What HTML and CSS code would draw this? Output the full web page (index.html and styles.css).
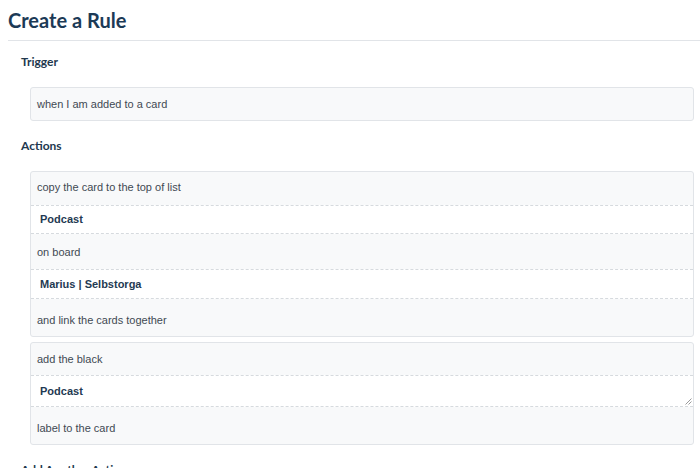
FILE: index.html
```html
<!DOCTYPE html>
<html>
<head>
<meta charset="utf-8">
<link rel="stylesheet" href="styles.css">
</head>
<body>
<div class="page">
  <h1 class="title">Create a Rule</h1>
  <section class="section first">
    <h2 class="label">Trigger</h2>
    <div class="box">
      <div class="row single">when I am added to a card</div>
    </div>
  </section>
  <section class="section">
    <h2 class="label">Actions</h2>
    <div class="box">
      <div class="row top">copy the card to the top of list</div>
      <div class="field h27">Podcast</div>
      <div class="row mid">on board</div>
      <div class="field h28">Marius | Selbstorga</div>
      <div class="row end">and link the cards together</div>
    </div>
    <div class="box">
      <div class="row top2">add the black</div>
      <div class="field h30 resizable">Podcast<svg class="grip" width="8" height="8" viewBox="0 0 8 8"><path d="M7.5 1.5 L1.5 7.5 M7.5 4.5 L4.5 7.5" stroke="#9a9a9a" stroke-width="1" fill="none"/></svg></div>
      <div class="row end">label to the card</div>
    </div>
  </section>
  <section class="section">
    <h2 class="label">Add Another Action</h2>
  </section>
</div>
</body>
</html>
```

FILE: styles.css
```css
html, body {
  margin: 0;
  padding: 0;
  background: #ffffff;
}
body {
  font-family: "Liberation Sans", Arial, sans-serif;
  overflow: hidden;
}
.page {
  padding-left: 8px;
}
.title {
  margin: 0;
  font-family: Lato, "Open Sans", sans-serif;
  font-weight: 700;
  font-size: 20px;
  line-height: 40px;
  color: #1c3a56;
  border-bottom: 1px solid #e1e4e8;
}
.section {
  padding-left: 13px;
  margin-top: 15px;
}
.section.first {
  margin-top: 11px;
}
.label {
  margin: 0 0 15px;
  font-family: Lato, "Open Sans", sans-serif;
  font-weight: 700;
  font-size: 12px;
  line-height: 20px;
  color: #22384e;
}
.box {
  margin: 0 6px 5px 9px;
  border: 1px solid #e1e4e8;
  border-radius: 3px;
  background: #f8f9fa;
  overflow: hidden;
}
.row {
  padding: 0 6px;
  font-size: 11px;
  line-height: 30px;
  color: #3f4953;
}
.row.single {
  line-height: 32px;
}
.row.top {
  padding-bottom: 3px;
}
.row.top2 {
  padding-top: 1px;
  padding-bottom: 1px;
}
.row.mid {
  padding-top: 3px;
  padding-bottom: 2px;
}
.row.end {
  padding-top: 6px;
  padding-bottom: 1px;
}
.field {
  position: relative;
  background: #ffffff;
  border-top: 1px dashed #d6dade;
  border-bottom: 1px dashed #d6dade;
  padding: 0 9px;
  font-size: 11px;
  font-weight: 700;
  color: #1f3a52;
}
.field.h27 { line-height: 27px; }
.field.h28 { line-height: 28px; }
.field.h30 { line-height: 30px; }
.grip {
  position: absolute;
  right: 1px;
  bottom: 1px;
  display: block;
}
```
